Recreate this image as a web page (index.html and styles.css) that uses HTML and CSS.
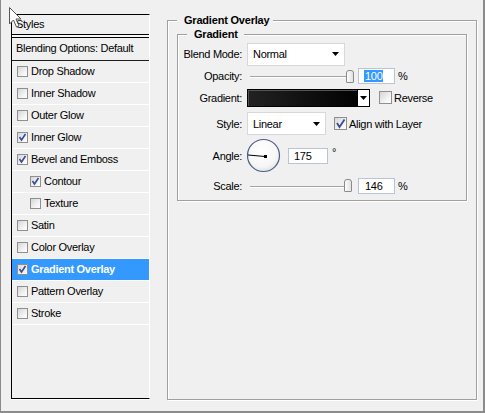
FILE: index.html
```html
<!DOCTYPE html>
<html>
<head>
<meta charset="utf-8">
<link rel="stylesheet" href="styles.css">
</head>
<body>
<div class="window">
  <div class="styles-list">
    <div class="list-head">Styles</div>
    <div class="list-gap"></div>
    <div class="list-blend">Blending Options: Default</div>
    <div class="item"><span class="cb"></span>Drop Shadow</div>
    <div class="item"><span class="cb"></span>Inner Shadow</div>
    <div class="item"><span class="cb"></span>Outer Glow</div>
    <div class="item"><span class="cb"><svg viewBox="0 0 9 9" width="9" height="9"><polyline points="1.5,4 3.5,7 7.5,1" fill="none" stroke="#3a4c94" stroke-width="1.6"/></svg></span>Inner Glow</div>
    <div class="item"><span class="cb"><svg viewBox="0 0 9 9" width="9" height="9"><polyline points="1.5,4 3.5,7 7.5,1" fill="none" stroke="#3a4c94" stroke-width="1.6"/></svg></span>Bevel and Emboss</div>
    <div class="item sub"><span class="cb"><svg viewBox="0 0 9 9" width="9" height="9"><polyline points="1.5,4 3.5,7 7.5,1" fill="none" stroke="#3a4c94" stroke-width="1.6"/></svg></span>Contour</div>
    <div class="item sub"><span class="cb"></span>Texture</div>
    <div class="item"><span class="cb"></span>Satin</div>
    <div class="item"><span class="cb"></span>Color Overlay</div>
    <div class="item sel"><span class="cb"><svg viewBox="0 0 9 9" width="9" height="9"><polyline points="1.5,4 3.5,7 7.5,1" fill="none" stroke="#3a4c94" stroke-width="1.6"/></svg></span>Gradient Overlay</div>
    <div class="item"><span class="cb"></span>Pattern Overlay</div>
    <div class="item"><span class="cb"></span>Stroke</div>
  </div>

  <div class="group outer">
    <div class="group-title">Gradient Overlay</div>
    <div class="group inner">
      <div class="group-title inner-title">Gradient</div>

      <div class="row r1">
        <span class="lbl">Blend Mode:</span>
        <div class="select w-blend"><span>Normal</span><svg class="arrow" width="7" height="4" viewBox="0 0 7 4"><polygon points="0,0 7,0 3.5,4" fill="#000"/></svg></div>
      </div>

      <div class="row r2">
        <span class="lbl">Opacity:</span>
        <div class="slider"><span class="thumb"></span></div>
        <div class="num"><span class="hl">100</span></div>
        <span class="pct">%</span>
      </div>

      <div class="row r3">
        <span class="lbl">Gradient:</span>
        <div class="grad"><span class="grad-fill"></span><span class="grad-btn"><svg width="7" height="4" viewBox="0 0 7 4"><polygon points="0,0 7,0 3.5,4" fill="#000"/></svg></span></div>
        <span class="cb big rev"></span><span class="cb-text">Reverse</span>
      </div>

      <div class="row r4">
        <span class="lbl">Style:</span>
        <div class="select w-style"><span>Linear</span><svg class="arrow" width="7" height="4" viewBox="0 0 7 4"><polygon points="0,0 7,0 3.5,4" fill="#000"/></svg></div>
        <span class="cb big align"><svg viewBox="0 0 11 11" width="11" height="11"><polyline points="2,5 4.5,9 9.5,1.5" fill="none" stroke="#3a4c94" stroke-width="1.8"/></svg></span><span class="cb-text">Align with Layer</span>
      </div>

      <div class="row r5">
        <span class="lbl">Angle:</span>
        <svg class="dial" width="34" height="36" viewBox="0 0 34 36">
          <defs>
            <radialGradient id="dg" cx="0.45" cy="0.35" r="0.7">
              <stop offset="0" stop-color="#ffffff"/>
              <stop offset="0.7" stop-color="#f6f6f6"/>
              <stop offset="1" stop-color="#dedede"/>
            </radialGradient>
          </defs>
          <circle cx="16.5" cy="17.5" r="16" fill="url(#dg)" stroke="#4e5e88" stroke-width="1.2"/>
          <line x1="1" y1="17" x2="18" y2="18.5" stroke="#000" stroke-width="1"/>
          <rect x="17" y="17" width="3" height="3" fill="#000"/>
        </svg>
        <div class="num angle">175</div>
        <span class="deg">°</span>
      </div>

      <div class="row r6">
        <span class="lbl">Scale:</span>
        <div class="slider scale"><span class="thumb"></span></div>
        <div class="num">146</div>
        <span class="pct">%</span>
      </div>
    </div>
  </div>

  <svg class="cursor" width="14" height="22" viewBox="0 0 14 22">
    <polygon points="0.5,0.5 0.5,17 4.5,13 7.5,20 10,19 7,12 12,12" fill="#fff" stroke="#555" stroke-width="1"/>
  </svg>
</div>
</body>
</html>
```
FILE: styles.css
```css
html, body {
  margin: 0;
  padding: 0;
}
body {
  background: #f0f0f0;
  font-family: "Liberation Sans", Arial, sans-serif;
  font-size: 11px;
  letter-spacing: -0.3px;
  color: #000;
}
.window {
  position: relative;
  width: 485px;
  height: 413px;
  box-sizing: border-box;
  border-left: 1px solid #8c8c8c;
  border-right: 2px solid #8c8c8c;
  border-bottom: 2px solid #8c8c8c;
  padding: 14px 0 0 10px;
  display: flex;
  align-items: flex-start;
}

/* ---------- styles list ---------- */
.styles-list {
  flex: none;
  width: 139px;
  height: 385px;
  box-sizing: border-box;
  border: 1px solid #000;
  border-right-color: #fff;
  box-shadow: 0 1px 0 #fff;
  background: #f0f0f0;
}
.list-head {
  height: 19px;
  line-height: 19px;
  padding-left: 4px;
  border-bottom: 1px solid #000;
}
.list-gap {
  height: 2px;
  background: #f7f7f7;
}
.list-blend {
  height: 22px;
  line-height: 21px;
  padding-left: 4px;
  border-top: 1px solid #000;
  border-bottom: 1px solid #1e1e1e;
}
.item {
  height: 21px;
  display: flex;
  align-items: center;
  padding-left: 5px;
  padding-bottom: 1px;
  box-sizing: content-box;
  height: 20px;
  border-bottom: 1px solid #fff;
  white-space: nowrap;
}
.item.sub {
  padding-left: 18px;
}
.item.sel {
  background: #3399ff;
  color: #fff;
  font-weight: bold;
}
.cb {
  flex: none;
  width: 11px;
  height: 11px;
  box-sizing: border-box;
  border: 1px solid #8e8f8f;
  background: linear-gradient(135deg, #d6d6d6, #f6f6f6 70%, #fdfdfd);
  margin-right: 3px;
  display: flex;
  align-items: center;
  justify-content: center;
}
.cb svg {
  display: block;
}
.item.sel .cb {
  background: linear-gradient(135deg, #dcdcdc, #fafafa);
}

/* ---------- group boxes ---------- */
.group {
  box-sizing: border-box;
  border: 1px solid #a0a0a0;
  box-shadow: inset 1px 1px 0 #fff, 1px 1px 0 #fff;
}
.outer {
  flex: none;
  width: 310px;
  height: 380px;
  margin: 6px 0 0 17px;
  padding: 0 9px;
}
.group-title {
  display: table;
  height: 13px;
  line-height: 13px;
  margin-top: -7px;
  padding: 0 4px 0 7px;
  background: #f0f0f0;
  font-weight: bold;
  letter-spacing: -0.2px;
}
.inner {
  width: 290px;
  margin-top: 7px;
  padding: 0 0 3px 0;
}
.inner-title {
  margin-left: 9px;
  padding-right: 6px;
}

/* ---------- rows ---------- */
.row {
  display: flex;
  align-items: center;
  white-space: nowrap;
}
.r1 { height: 26px; }
.r2 { height: 18px; }
.r3 { height: 25px; }
.r4 { height: 27px; }
.r5 { height: 37px; }
.r6 { height: 23px; }

.lbl {
  flex: none;
  width: 64px;
  text-align: right;
  margin-right: 5px;
}

.select {
  flex: none;
  height: 23px;
  box-sizing: border-box;
  border: 1px solid #d8d8d8;
  background: #fff;
  display: flex;
  align-items: center;
  padding-left: 5px;
}
.select .arrow {
  margin-left: auto;
  margin-right: 5px;
}
.w-blend { width: 98px; }
.w-style { width: 79px; }

.slider {
  flex: none;
  width: 104px;
  height: 18px;
  margin-left: 3px;
  display: flex;
  align-items: center;
  background:
    linear-gradient(#a4a4a4, #a4a4a4) 0 9px / 97px 1px no-repeat,
    linear-gradient(#ffffff, #ffffff) 0 10px / 97px 1px no-repeat;
}
.thumb {
  width: 8px;
  height: 13px;
  box-sizing: border-box;
  margin-left: 96px;
  border: 1px solid #8a8a8a;
  border-radius: 3px 3px 1px 1px;
  background: linear-gradient(to right, #fdfdfd, #e2e2e2);
}
.slider.scale .thumb {
  margin-left: 94px;
}

.num {
  flex: none;
  width: 37px;
  height: 16px;
  box-sizing: border-box;
  margin-left: 4px;
  border: 1px solid #b9c4d4;
  background: #fff;
  padding-left: 6px;
  line-height: 14px;
}
.hl {
  background: #3399ff;
  color: #fff;
  padding: 0 1px;
  margin-left: -1px;
}
.pct {
  margin-left: 3px;
}

.grad {
  flex: none;
  width: 123px;
  height: 18px;
  box-sizing: border-box;
  border: 1px solid #000;
  display: flex;
}
.grad-fill {
  flex: 1;
  background: linear-gradient(to right, #222 0%, #111 50%, #030303 100%);
  box-shadow: inset 1px 1px 0 #555;
}
.grad-btn {
  flex: none;
  width: 11px;
  border-left: 1px solid #000;
  background: #fff;
  display: flex;
  align-items: center;
  justify-content: center;
}
.cb.big {
  width: 13px;
  height: 13px;
  margin-right: 2px;
}
.cb.rev {
  margin-left: 9px;
}
.cb.align {
  margin-left: 8px;
}

.dial {
  flex: none;
  display: block;
}
.num.angle {
  width: 40px;
  margin-left: 7px;
  padding-left: 5px;
}
.deg {
  align-self: flex-start;
  margin-top: 9px;
  margin-left: 4px;
}

/* ---------- mouse cursor ---------- */
.cursor {
  position: absolute;
  left: 8px;
  top: 7px;
}
```
